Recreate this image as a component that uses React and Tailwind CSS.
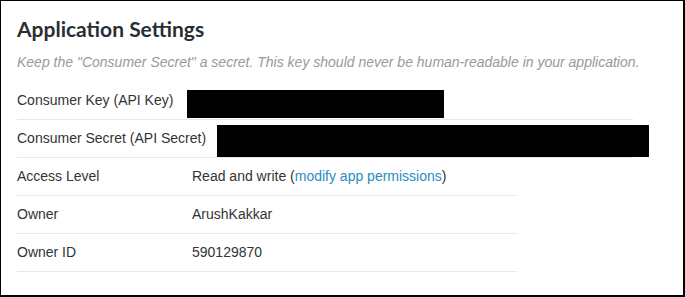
import React from "react";

function Row({ label, children }) {
  return (
    <div className="flex h-[38px] w-[500px] items-center border-b border-[#e8e8e8]">
      <div className="w-[175px] shrink-0">{label}</div>
      <div className="whitespace-nowrap">{children}</div>
    </div>
  );
}

export default function App() {
  return (
    <div
      className="w-[685px] h-[297px] overflow-hidden bg-white border-l border-t border-r-2 border-b-2 border-black pl-[16px] text-[14px] text-[#333]"
      style={{ fontFamily: '"Liberation Sans", Arial, sans-serif' }}
    >
      <h1
        className="pt-[16px] text-[21px] leading-[24px] font-bold text-[#292f33]"
        style={{ fontFamily: 'Lato, "Liberation Sans", sans-serif' }}
      >
        Application Settings
      </h1>
      <p className="mt-[12px] italic text-[#999] leading-[18px] whitespace-nowrap">
        Keep the "Consumer Secret" a secret. This key should never be human-readable in your application.
      </p>
      <div className="mt-[11px]">
        <div className="flex h-[38px] w-[616px] items-start border-b border-[#e8e8e8]">
          <div className="self-center whitespace-nowrap shrink-0">Consumer Key (API Key)</div>
          <div className="ml-[14px] mt-[8px] h-[28px] w-[257px] shrink-0 bg-black" />
        </div>
        <div className="flex h-[38px] w-[616px] items-start border-b border-[#e8e8e8]">
          <div className="self-center whitespace-nowrap shrink-0">Consumer Secret (API Secret)</div>
          <div className="ml-[11px] mt-[5px] h-[32px] w-[432px] shrink-0 bg-black" />
        </div>
        <Row label="Access Level">
          Read and write (<a className="text-[#2b8cbf]">modify app permissions</a>)
        </Row>
        <Row label="Owner">ArushKakkar</Row>
        <Row label="Owner ID">590129870</Row>
      </div>
    </div>
  );
}
